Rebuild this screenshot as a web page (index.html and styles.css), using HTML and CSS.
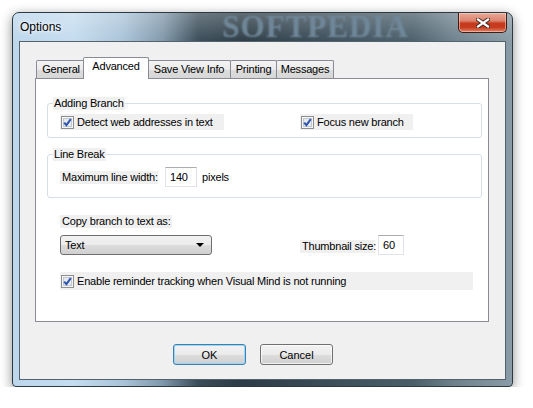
FILE: index.html
```html
<!DOCTYPE html>
<html lang="en">
<head>
    <meta charset="UTF-8">
    <title>Options</title>
    <link rel="stylesheet" href="styles.css">
</head>
<body>
    <div class="window">
        <div class="titlebar">
            <span class="title">Options</span>
            <span class="watermark">SOFTPEDIA</span>
            <button class="close-btn">
                <svg viewBox="0 0 14 10" width="14" height="10">
                    <path d="M2 1.5 L12 8.5 M12 1.5 L2 8.5" stroke="#3a2420" stroke-width="4" stroke-linecap="square"/>
                    <path d="M2 1.5 L12 8.5 M12 1.5 L2 8.5" stroke="#fff" stroke-width="2.2" stroke-linecap="square"/>
                </svg>
            </button>
        </div>
        <div class="client">
            <div class="tabs">
                <div class="tab tab-general">General</div>
                <div class="tab tab-advanced active">Advanced</div>
                <div class="tab tab-save">Save View Info</div>
                <div class="tab tab-printing">Printing</div>
                <div class="tab tab-messages">Messages</div>
            </div>
            <div class="tab-panel">
                <fieldset class="group group-branch">
                    <legend>Adding Branch</legend>
                    <div class="check-grid">
                        <label class="check check-detect">
                            <span class="box"><svg viewBox="0 0 13 13" width="13" height="13"><rect x="0.5" y="0.5" width="12" height="12" fill="#f4f4f4" stroke="#8e8f8f"/><rect x="2.5" y="2.5" width="8" height="8" fill="#e6e9ee" stroke="#c2c8d0"/><path d="M3.2 6.6 L5.4 9.2 L9.8 3.2" fill="none" stroke="#2d55b0" stroke-width="2"/></svg></span>
                            Detect web addresses in text
                        </label>
                        <label class="check check-focus">
                            <span class="box"><svg viewBox="0 0 13 13" width="13" height="13"><rect x="0.5" y="0.5" width="12" height="12" fill="#f4f4f4" stroke="#8e8f8f"/><rect x="2.5" y="2.5" width="8" height="8" fill="#e6e9ee" stroke="#c2c8d0"/><path d="M3.2 6.6 L5.4 9.2 L9.8 3.2" fill="none" stroke="#2d55b0" stroke-width="2"/></svg></span>
                            Focus new branch
                        </label>
                    </div>
                </fieldset>
                <fieldset class="group group-break">
                    <legend>Line Break</legend>
                    <div class="field-row">
                        <span class="label width-label">Maximum line width:</span>
                        <span class="edit edit-width">140</span>
                        <span class="unit">pixels</span>
                    </div>
                </fieldset>
                <div class="copy-area">
                    <div class="label copy-label">Copy branch to text as:</div>
                    <div class="copy-row">
                        <div class="combo">
                            <span>Text</span>
                            <span class="combo-arrow"></span>
                        </div>
                        <span class="label thumb-label">Thumbnail size:</span>
                        <span class="edit edit-thumb">60</span>
                    </div>
                    <label class="check check-reminder">
                        <span class="box"><svg viewBox="0 0 13 13" width="13" height="13"><rect x="0.5" y="0.5" width="12" height="12" fill="#f4f4f4" stroke="#8e8f8f"/><rect x="2.5" y="2.5" width="8" height="8" fill="#e6e9ee" stroke="#c2c8d0"/><path d="M3.2 6.6 L5.4 9.2 L9.8 3.2" fill="none" stroke="#2d55b0" stroke-width="2"/></svg></span>
                        Enable reminder tracking when Visual Mind is not running
                    </label>
                </div>
            </div>
            <div class="buttons">
                <button class="btn btn-default">OK</button>
                <button class="btn">Cancel</button>
            </div>
        </div>
    </div>
</body>
</html>
```

FILE: styles.css
```css
html {  /* page */
    font-size: 11px;
}
body {  /* white desktop behind the dialog */
    margin: 0;
    background: #fff;
    font-family: "Liberation Sans", Arial, sans-serif;
    color: #000;
}
.window {  /* glass frame */
    box-sizing: border-box;
    width: 501px;
    height: 375px;
    margin: 12px 0 0 12px;
    padding: 0 6px 6px 6px;
    border: 1px solid #2e3a42;
    border-radius: 7px 7px 4px 4px;
    background:
        linear-gradient(180deg, rgba(255,255,255,0.25) 0, rgba(255,255,255,0) 30px),
        linear-gradient(90deg, #bcd6ec 0, #c4dcef 60px, #a9c3d8 110px, #7f97aa 150px, #3a4c58 185px, #2c3b45 230px, #3e515d 330px, #4a5e6a 400px, #6d808c 440px, #8a9ca7 500px);
    box-shadow: 0 3px 12px rgba(0,0,0,0.45);
    display: flex;
    flex-direction: column;
}
.titlebar {  /* caption row */
    height: 28px;
    display: flex;
    align-items: flex-start;
    flex-shrink: 0;
}
.title {  /* caption text */
    font-size: 12px;
    line-height: 28px;
    padding-left: 1px;
    text-shadow: 0 0 6px #fff, 0 0 3px #fff;
}
.watermark {  /* blurred logo in the glass */
    margin-left: 161px;
    font-family: "Liberation Serif", serif;
    font-weight: bold;
    font-size: 31px;
    line-height: 28px;
    letter-spacing: 1px;
    color: transparent;
    text-shadow: 0 0 2px #70889a;
}
.close-btn {  /* red close button */
    margin-left: auto;
    margin-right: -1px;
    width: 49px;
    height: 20px;
    padding: 0;
    border: 1px solid #3d1d16;
    border-top: none;
    border-radius: 0 0 5px 5px;
    background: linear-gradient(180deg, #e9a897 0, #dc8570 40%, #c7391c 55%, #c63a1d 75%, #e0866b 100%);
    box-shadow: inset 0 0 0 1px rgba(255,220,210,0.5);
    display: flex;
    align-items: center;
    justify-content: center;
}
.client {  /* dialog body */
    flex: 1;
    background: #f0f0f0;
    border: 1px solid #52636f;
    padding: 15px 0 0 15px;
    letter-spacing: -0.2px;
}
.tabs {  /* tab strip */
    height: 21px;
    display: flex;
    align-items: flex-end;
    padding-left: 1px;
}
.tab {  /* inactive tab */
    box-sizing: border-box;
    height: 18px;
    line-height: 16px;
    text-align: center;
    white-space: nowrap;
    border: 1px solid #898c95;
    border-bottom: none;
    border-radius: 2px 2px 0 0;
    background: linear-gradient(180deg, #f3f3f3 0, #ebebeb 50%, #dcdcdc 51%, #d7d7d7 100%);
    margin-right: -1px;
}
.tab.active {  /* selected tab */
    height: 22px;
    line-height: 17px;
    background: #fff;
    margin: 0 -2px -1px -2px;
    position: relative;
    z-index: 1;
}
.tab-general { width: 50px; }
.tab-advanced { width: 66px; }
.tab-save { width: 84px; }
.tab-printing { width: 47px; }
.tab-messages { width: 58px; }
.tab-panel {  /* white page under the tabs */
    box-sizing: border-box;
    width: 454px;
    height: 244px;
    border: 1px solid #898c95;
    background: #fff;
    padding: 18px 6px 0 11px;
}
.group {  /* group box */
    margin: 0;
    min-width: 0;
    border: 1px solid #d5dfe5;
    border-radius: 3px;
    padding: 4px 6px 7px 12px;
}
.group legend {  /* group caption */
    margin-left: -7px;
    padding: 0 1px;
    line-height: 13px;
    background: #f0f0f0;
}
.group-break {  /* second group */
    margin-top: 10px;
    padding-top: 6px;
    padding-bottom: 10px;
}
.check-grid {  /* two checkboxes on one row */
    display: grid;
    grid-template-columns: 240px auto;
}
.check {  /* checkbox with grey label */
    box-sizing: border-box;
    height: 16px;
    display: flex;
    align-items: center;
    gap: 3px;
    white-space: nowrap;
    background: #f0f0f0;
}
.box {  /* checkbox glyph */
    display: flex;
    margin-left: 1px;
}
.check-detect { width: 164px; }
.check-focus { width: 113px; }
.field-row {  /* label, edit, unit */
    display: flex;
    align-items: center;
}
.label {  /* grey static text */
    box-sizing: border-box;
    line-height: 13px;
    padding: 0 2px;
    white-space: nowrap;
    background: #f0f0f0;
}
.width-label { width: 98px; }
.edit {  /* text box */
    box-sizing: border-box;
    height: 20px;
    line-height: 18px;
    padding-left: 4px;
    border: 1px solid #e2e3ea;
    border-top-color: #abadb3;
    background: #fff;
}
.edit-width {
    width: 32px;
    margin-left: 7px;
}
.unit { margin-left: 5px; }
.copy-area {  /* free controls below the groups */
    margin: 17px 0 0 13px;
}
.copy-label { width: 112px; }
.copy-row {  /* combo and thumbnail size */
    display: flex;
    align-items: center;
    margin-top: 6px;
}
.combo {  /* drop-down list */
    box-sizing: border-box;
    width: 152px;
    height: 20px;
    padding: 0 4px 0 4px;
    border: 1px solid #707070;
    border-radius: 3px;
    background: linear-gradient(180deg, #f2f2f2 0, #ebebeb 50%, #dddddd 51%, #cfcfcf 100%);
    display: flex;
    align-items: center;
    justify-content: space-between;
}
.combo-arrow {  /* small black triangle */
    width: 0;
    height: 0;
    margin-right: 3px;
    border-left: 4px solid transparent;
    border-right: 4px solid transparent;
    border-top: 4px solid #000;
}
.thumb-label {
    margin: 3px 0 0 88px;
    width: 75px;
}
.edit-thumb {
    width: 26px;
    margin: 1px 0 0 3px;
}
.check-reminder {  /* long checkbox */
    width: 413px;
    height: 18px;
    margin-top: 17px;
}
.buttons {  /* OK and Cancel */
    display: flex;
    gap: 14px;
    margin-top: 22px;
    padding-left: 138px;
}
.btn {  /* push button */
    width: 73px;
    height: 21px;
    padding: 0;
    font-family: "Liberation Sans", Arial, sans-serif;
    font-size: 11px;
    color: #000;
    border: 1px solid #707070;
    border-radius: 3px;
    background: linear-gradient(180deg, #f2f2f2 0, #ebebeb 50%, #dddddd 51%, #cfcfcf 100%);
    box-shadow: inset 0 0 0 1px rgba(255,255,255,0.7);
}
.btn-default {  /* focused default button */
    border-color: #3c7fb1;
    box-shadow: inset 0 0 0 1px #98d8f5;
}
```
